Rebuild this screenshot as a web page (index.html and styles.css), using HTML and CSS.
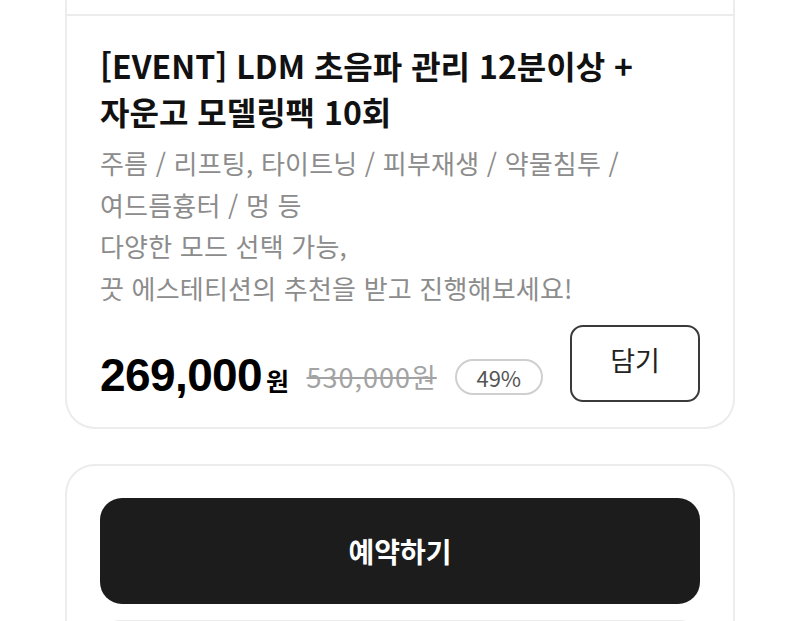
FILE: index.html
```html
<!DOCTYPE html>
<html lang="ko">
<head>
<meta charset="utf-8">
<link rel="stylesheet" href="styles.css">
</head>
<body>
<div class="page">
  <section class="card product">
    <div class="prev"></div>
    <div class="content">
      <h1 class="title">[EVENT] LDM 초음파 관리 12분이상 +<br>자운고 모델링팩 10회</h1>
      <p class="desc">주름 / 리프팅, 타이트닝 / 피부재생 / 약물침투 /<br>여드름흉터 / 멍 등<br>다양한 모드 선택 가능,<br>끗 에스테티션의 추천을 받고 진행해보세요!</p>
      <div class="price-row">
        <div class="prices">
          <span class="price">269,000<span class="won">원</span></span>
          <span class="orig">530,000원</span>
          <span class="rate">49%</span>
        </div>
        <button class="add">담기</button>
      </div>
    </div>
  </section>
  <section class="card actions">
    <button class="reserve">예약하기</button>
    <div class="next"></div>
  </section>
</div>
</body>
</html>
```

FILE: styles.css
```css
* { box-sizing: border-box; }
html, body {
  margin: 0;
  padding: 0;
  background: #ffffff;
  font-family: "Noto Sans CJK KR", "Noto Sans", sans-serif;
  color: #111;
}
.page {
  width: 800px;
  height: 621px;
  overflow: hidden;
  padding-left: 65px;
}
.card {
  width: 670px;
  border: 2px solid #ececec;
  border-radius: 30px;
  background: #fff;
}
.product {
  border-top: none;
  border-top-left-radius: 0;
  border-top-right-radius: 0;
}
.prev {
  height: 16px;
  border-bottom: 2px solid #ececec;
}
.content {
  padding: 26px 33px 25px 33px;
}
.title {
  margin: 0;
  font-size: 32px;
  line-height: 46px;
  font-weight: 600;
  letter-spacing: 0;
  color: #111;
  white-space: nowrap;
}
.desc {
  margin: 8px 0 0 0;
  font-size: 26px;
  line-height: 41.7px;
  color: #8c8c8c;
  font-weight: 400;
  letter-spacing: 0.2px;
  white-space: nowrap;
}
.price-row {
  display: flex;
  justify-content: space-between;
  align-items: flex-end;
  margin-top: 16px;
}
.prices {
  display: flex;
  align-items: center;
  gap: 18px;
  padding-bottom: 0;
}
.price {
  font-family: "Liberation Sans", "Noto Sans CJK KR", sans-serif;
  font-size: 46px;
  font-weight: 700;
  letter-spacing: -0.6px;
  color: #000;
}
.won {
  font-family: "Noto Sans CJK KR", sans-serif;
  font-size: 25px;
  font-weight: 700;
  margin-left: 4px;
}
.orig {
  font-size: 27px;
  color: #a3a3a3;
  text-decoration: line-through;
  text-decoration-thickness: 2px;
  letter-spacing: 1px;
  margin-top: 4px;
}
.rate {
  display: inline-flex;
  align-items: center;
  justify-content: center;
  width: 88px;
  height: 36px;
  border: 2px solid #cfcfcf;
  border-radius: 18px;
  font-size: 22px;
  color: #555;
  margin-top: 4px;
}
.add {
  width: 130px;
  height: 77px;
  border: 2px solid #3a3a3a;
  border-radius: 13px;
  background: #fff;
  font-family: "Noto Sans CJK KR", sans-serif;
  font-size: 27px;
  color: #222;
  padding: 0 0 8px 0;
}
.actions {
  margin-top: 35px;
  padding: 32px 33px 0 33px;
  height: 200px;
}
.reserve {
  display: block;
  width: 600px;
  height: 106px;
  border: none;
  border-radius: 22px;
  background: #1c1c1c;
  color: #fff;
  font-family: "Noto Sans CJK KR", sans-serif;
  font-size: 28px;
  font-weight: 700;
}
.next {
  margin-top: 16px;
  width: 600px;
  height: 40px;
  border: 2px solid #ececec;
  border-radius: 22px;
}
```
